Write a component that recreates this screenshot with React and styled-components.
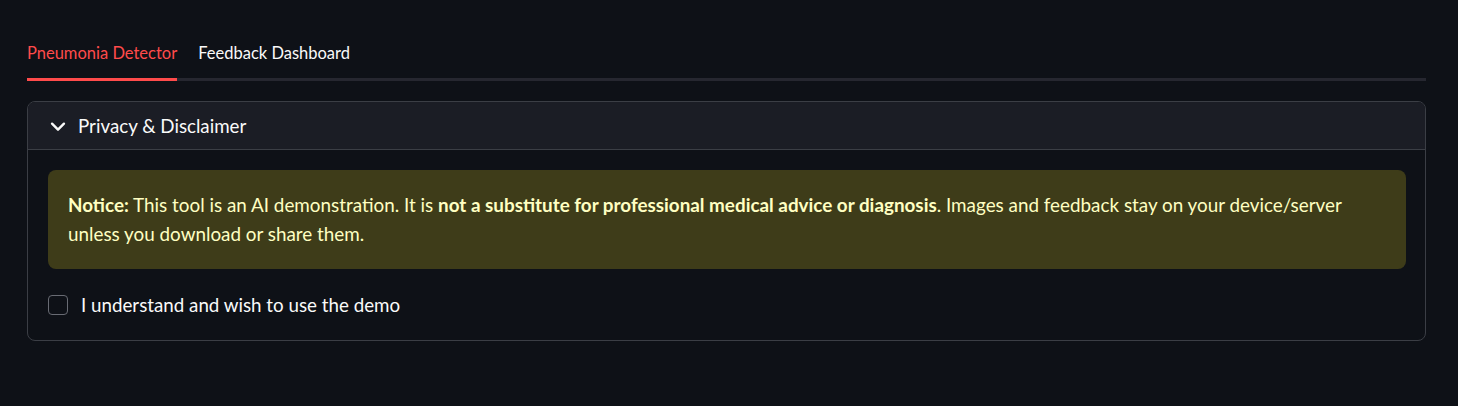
import React, { useState } from 'react'
import styled, { createGlobalStyle } from 'styled-components'

const GlobalStyle = createGlobalStyle`
  html, body {
    margin: 0;
    background: #0e1117;
    color: #fafafa;
    font-family: Lato, "Noto Sans", sans-serif;
  }
`

const Page = styled.main`
  padding: 41px 32px 0 27px;
  min-height: 406px;
  box-sizing: border-box;
`

const TabList = styled.div`
  display: flex;
  gap: 21px;
  box-shadow: inset 0 -3px 0 #262730;
`

const Tab = styled.button`
  background: none;
  border: none;
  padding: 0 0 13px;
  font-family: inherit;
  font-size: 16.5px;
  line-height: 24px;
  cursor: pointer;
  color: ${props => props.active ? '#ff4b4b' : '#fafafa'};
  border-bottom: 3px solid ${props => props.active ? '#ff4b4b' : 'transparent'};
`

const Expander = styled.section`
  margin-top: 20px;
  border: 1px solid #3b3e45;
  border-radius: 8px;
  overflow: hidden;
`

const Header = styled.div`
  display: flex;
  align-items: center;
  height: 47px;
  padding-left: 19px;
  gap: 9px;
  background: #1b1d25;
  border-bottom: 1px solid #3b3e45;
  font-size: 18.75px;
  cursor: pointer;
`

const Body = styled.div`
  padding: 20px 19px 25px 20px;
`

const Alert = styled.div`
  background: #3e3c19;
  color: #ffffc2;
  border-radius: 8px;
  padding: 20px 20px 21px 20px;
  font-size: 18.85px;
  line-height: 29px;
`

const Strong = styled.strong`
  font-weight: 700;
`

const CheckRow = styled.label`
  display: flex;
  align-items: center;
  gap: 13px;
  margin-top: 26px;
  font-size: 18.75px;
  line-height: 20px;
  cursor: pointer;
`

const Box = styled.span`
  width: 18px;
  height: 18px;
  border: 1px solid #686b73;
  border-radius: 4px;
  background: ${props => props.checked ? '#ff4b4b' : 'transparent'};
`

function Chevron() {
  return (
    <svg width="22" height="22" viewBox="0 0 24 24" fill="none" stroke="#fafafa" strokeWidth="2.6" strokeLinecap="round" strokeLinejoin="round">
      <path d="M5.5 9.5l6.5 6.5 6.5-6.5" />
    </svg>
  )
}

export default function App() {
  const [tab, setTab] = useState(0)
  const [agree, setAgree] = useState(false)
  return (
    <>
      <GlobalStyle />
      <Page>
        <TabList>
          <Tab active={tab === 0} onClick={() => setTab(0)}>Pneumonia Detector</Tab>
          <Tab active={tab === 1} onClick={() => setTab(1)}>Feedback Dashboard</Tab>
        </TabList>
        <Expander>
          <Header>
            <Chevron />
            Privacy &amp; Disclaimer
          </Header>
          <Body>
            <Alert>
              <Strong>Notice:</Strong> This tool is an AI demonstration. It is <Strong>not a substitute for professional medical advice or diagnosis</Strong>. Images and feedback stay on your device/server unless you download or share them.
            </Alert>
            <CheckRow onClick={() => setAgree(!agree)}>
              <Box checked={agree} />
              I understand and wish to use the demo
            </CheckRow>
          </Body>
        </Expander>
      </Page>
    </>
  )
}
